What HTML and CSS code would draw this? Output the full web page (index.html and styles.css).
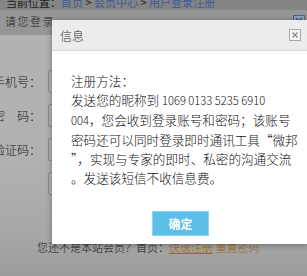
FILE: index.html
```html
<!DOCTYPE html>
<html lang="zh-CN">
<head>
<meta charset="utf-8">
<title>请您登录</title>
<link rel="stylesheet" href="styles.css">
</head>
<body class="site">
<div class="site-wrap">
  <div class="crumb">当前位置：<a class="crumb-link">首页</a> &gt; <a class="crumb-link">会员中心</a> &gt; <a class="crumb-link">用户登录注册</a></div>
  <div class="login-box">
    <div class="login-head">
      <span class="login-title">请您登录</span>
      <svg class="login-close" width="12" height="12" viewBox="0 0 12 12"><rect x="0.5" y="0.5" width="11" height="11" fill="#95a3b8" stroke="#3f6399"/><path d="M3 3L9 9M9 3L3 9" stroke="#37588c" stroke-width="1.6"/></svg>
    </div>
    <div class="login-fields">
      <div class="field"><span class="field-label">手机号：</span><span class="field-box"></span></div>
      <div class="field"><span class="field-label">密　码：</span><span class="field-box"></span></div>
      <div class="field"><span class="field-label">验证码：</span><span class="field-box"></span></div>
      <div class="field"><span class="field-label"></span><span class="field-box"></span></div>
    </div>
    <div class="login-foot">您还不是本站会员？首页：<a class="foot-link under">快速注册</a> <a class="foot-link">重置密码</a></div>
  </div>
</div>
<div class="dialog">
  <div class="dialog-head">
    <span class="dialog-title">信息</span>
    <svg class="dialog-close" width="12" height="12" viewBox="0 0 12 12"><rect x="0.5" y="0.5" width="11" height="11" fill="#f4f4f4" stroke="#a9a9a9"/><path d="M3.5 3.5L8.5 8.5M8.5 3.5L3.5 8.5" stroke="#8a8a8a" stroke-width="1.3"/></svg>
  </div>
  <div class="dialog-body">
    <p class="msg">注册方法：<br>发送您的昵称到 <span class="num">1069 0133 5235 6910</span><br><span class="num">004</span>，您会收到登录账号和密码；该账号<br>密码还可以同时登录即时通讯工具“微邦<br>”，实现与专家的即时、私密的沟通交流<br>。发送该短信不收信息费。</p>
    <div class="actions"><button class="btn-ok">确定</button></div>
  </div>
</div>
</body>
</html>
```
FILE: styles.css
```css
* { box-sizing: border-box; margin: 0; padding: 0; }
html {
  width: 307px;
  height: 276px;
  overflow: hidden;
  background-color: #9c9c9c;
}
.site {
  width: 307px;
  height: 276px;
  overflow: hidden;
  font-family: "Noto Sans CJK SC", "Noto Sans", sans-serif;
  font-size: 12px;
  color: #1c1c1c;
  background-color: #9c9c9c;
  position: relative;
}
.site-wrap {
  height: 276px;
  display: flex;
  flex-direction: column;
  background-color: #9c9c9c;
}
.crumb {
  margin-top: -6px;
  height: 16px;
  line-height: 16px;
  padding-left: 6px;
  font-size: 11px;
  background-color: #858585;
  color: #1c1c1c;
  white-space: nowrap;
}
.crumb-link { color: #3d5c98; }
.login-box {
  flex: 1;
  display: flex;
  flex-direction: column;
  background-color: #b1b1b1;
  background-image: linear-gradient(#b2b2b2 0, #b1b1b1 150px, #a6a6a6 230px, #9b9b9b 266px);
}
.login-head {
  height: 25px;
  background-color: #969696;
  display: flex;
  align-items: center;
  justify-content: space-between;
  padding: 0 2px 4px 5px;
}
.login-title { font-size: 11px; letter-spacing: 1.5px; color: #222; font-weight: 300; }
.login-close { display: block; }
.login-fields {
  padding-top: 35px;
  display: flex;
  flex-direction: column;
  gap: 11px;
}
.field { display: flex; align-items: center; height: 23px; }
.field-label {
  width: 41px;
  display: flex;
  justify-content: flex-end;
  white-space: nowrap;
  font-size: 12px;
  font-weight: 300;
  color: #181818;
}
.field-box {
  margin-left: 7px;
  width: 150px;
  height: 23px;
  border: 1px solid #8a8a8a;
  border-radius: 2px;
  background-color: #b3b3b3;
}
.login-foot {
  margin-top: 44px;
  padding-left: 37px;
  font-size: 11px;
  font-weight: 300;
  white-space: nowrap;
  color: #181818;
}
.foot-link { color: #9c6a1f; }
.under { text-decoration: underline; }
.dialog {
  position: absolute;
  left: 52px;
  top: 20px;
  width: 257px;
  background-color: #fff;
  box-shadow: 0 1px 6px rgba(0, 0, 0, 0.35);
}
.dialog-head {
  height: 31px;
  background-color: #ececec;
  border-bottom: 1px solid #d9d9d9;
  display: flex;
  align-items: center;
  justify-content: space-between;
  padding: 0 8px;
}
.dialog-title { font-size: 12px; color: #333; font-weight: 300; }
.dialog-close { display: block; }
.dialog-body { padding: 20px 8px 8px 19px; }
.msg {
  font-size: 12.6px;
  font-weight: 300;
  line-height: 19px;
  color: #111;
  white-space: nowrap;
}
.num { font-size: 11.2px; }
.actions { margin-top: 24px; display: flex; justify-content: center; padding-right: 11px; }
.btn-ok {
  width: 57px;
  height: 25px;
  background-color: #5dbfe8;
  border: 1px solid #8ed4f2;
  color: #fff;
  font-family: "Noto Sans CJK SC", sans-serif;
  font-size: 12px;
  font-weight: bold;
}
```
